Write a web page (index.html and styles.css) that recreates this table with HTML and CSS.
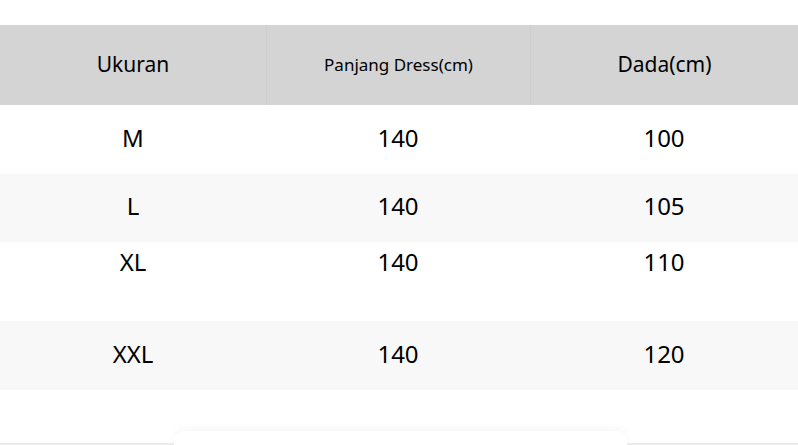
FILE: index.html
```html
<!DOCTYPE html>
<html>
<head>
<meta charset="utf-8">
<link rel="stylesheet" href="styles.css">
</head>
<body>
<div class="page">
  <div class="table">
    <div class="row head">
      <div class="cell big">Ukuran</div>
      <div class="cell small">Panjang Dress(cm)</div>
      <div class="cell big">Dada(cm)</div>
    </div>
    <div class="row r1">
      <div class="cell">M</div><div class="cell">140</div><div class="cell">100</div>
    </div>
    <div class="row r2 alt">
      <div class="cell">L</div><div class="cell">140</div><div class="cell">105</div>
    </div>
    <div class="row r3">
      <div class="cell">XL</div><div class="cell">140</div><div class="cell">110</div>
    </div>
    <div class="row r4 alt">
      <div class="cell">XXL</div><div class="cell">140</div><div class="cell">120</div>
    </div>
  </div>
  <div class="footer">
    <div class="card"></div>
  </div>
</div>
</body>
</html>
```
FILE: styles.css
```css
html, body {
  margin: 0;
  padding: 0;
  background: #ffffff;
  width: 798px;
  height: 445px;
  overflow: hidden;
}
.page {
  font-family: "Noto Sans", "Open Sans", sans-serif;
  color: #000;
  padding-top: 25px;
  display: flex;
  flex-direction: column;
  height: 420px;
}
.table {
  display: flex;
  flex-direction: column;
}
.row {
  display: grid;
  grid-template-columns: 266px 264px 268px;
}
.cell {
  display: flex;
  align-items: center;
  justify-content: center;
  font-size: 24px;
  padding-bottom: 5px;
}
.head {
  height: 80px;
  background: #d4d4d4;
}
.head .cell {
  padding-bottom: 2px;
}
.head .cell + .cell {
  border-left: 1px solid #cdcdcd;
}
.head .big { font-size: 21px; }
.head .small { font-size: 17px; }
.r1 { height: 69px; }
.r2 { height: 68px; }
.r3 { height: 79px; }
.r3 .cell { align-items: flex-start; padding-top: 3px; padding-bottom: 0; }
.r4 { height: 69px; }
.alt { background: #f8f8f8; }
.footer {
  margin-top: auto;
  height: 12px;
  border-bottom: 2px solid #ececec;
  display: flex;
  justify-content: center;
}
.card {
  width: 453px;
  margin-left: 2px;
  background: #fff;
  border-radius: 10px 10px 0 0;
  box-shadow: 0 -2px 10px rgba(0,0,0,0.04);
  height: 14px;
}
```
